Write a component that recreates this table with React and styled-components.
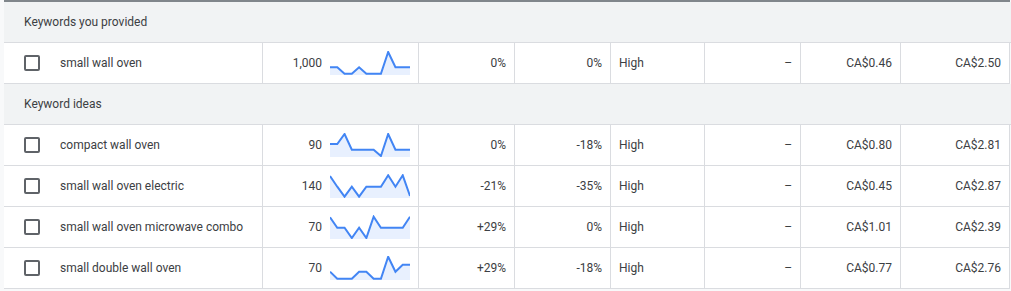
import React from "react";
import styled, { createGlobalStyle } from "styled-components";

const Global = createGlobalStyle`
  html, body { margin: 0; padding: 0; background: #f8f9fa; }
  body { font-family: Roboto, "Liberation Sans", Arial, sans-serif; }
  * { box-sizing: border-box; }
`;

const COLS = "259px 156px 96px 96px 94px 96px 100px 109px";

const Table = styled.div`
  margin-left: 4px;
  width: 1006px;
  border-top: 2px solid #80868b;
  font-size: 12px;
  color: #3c4043;
`;

const Band = styled.div`
  height: 41px;
  display: flex;
  align-items: center;
  padding-left: 20px;
  background: #f1f3f4;
  border-bottom: 1px solid #dadce0;
  width: 1007px;
`;

const Row = styled.div`
  display: grid;
  grid-template-columns: ${COLS};
  height: 41px;
  background: #fff;
  border-bottom: 1px solid #dadce0;
`;

const Cell = styled.div`
  display: flex;
  align-items: center;
  justify-content: ${(p) => (p.$align === "left" ? "flex-start" : "flex-end")};
  gap: ${(p) => p.$gap || 0}px;
  padding: 0 8px;
  border-right: 1px solid #dadce0;
  white-space: nowrap;
`;

const KeywordCell = styled(Cell)`
  justify-content: flex-start;
  padding-left: 20px;
  gap: 20px;
`;

const Checkbox = styled.span`
  width: 16px;
  height: 16px;
  border: 2px solid #5f6368;
  border-radius: 2px;
  flex: none;
`;

function Spark({ pts }) {
  const W = 80;
  const H = 24;
  const step = W / (pts.length - 1);
  const coords = pts.map((y, i) => `${(i * step).toFixed(2)},${y}`);
  const line = coords.join(" ");
  const area = `0,${H} ${line} ${W},${H}`;
  return (
    <svg width={W} height={H} viewBox={`0 0 ${W} ${H}`} style={{ flex: "none", display: "block" }}>
      <polygon points={area} fill="#e8f0fe" />
      <polyline points={line} fill="none" stroke="#4285f4" strokeWidth="2" strokeLinejoin="miter" />
    </svg>
  );
}

const provided = [
  {
    kw: "small wall oven",
    vol: "1,000",
    spark: [16.3, 16.3, 22.7, 22.7, 16.3, 22.7, 22.7, 22.7, 1, 16.3, 16.3, 16.3],
    c3: "0%",
    c4: "0%",
    comp: "High",
    dash: "–",
    low: "CA$0.46",
    high: "CA$2.50",
  },
];

const ideas = [
  {
    kw: "compact wall oven",
    vol: "90",
    spark: [11, 11, 1, 16.7, 16.7, 16.7, 16.7, 23, 1, 16.7, 16.7, 16.7],
    c3: "0%",
    c4: "-18%",
    comp: "High",
    dash: "–",
    low: "CA$0.80",
    high: "CA$2.81",
  },
  {
    kw: "small wall oven electric",
    vol: "140",
    spark: [2, 12.7, 22.7, 12.7, 22.7, 12.7, 12.7, 12.7, 1.3, 12.7, 1.3, 22],
    c3: "-21%",
    c4: "-35%",
    comp: "High",
    dash: "–",
    low: "CA$0.45",
    high: "CA$2.87",
  },
  {
    kw: "small wall oven microwave combo",
    vol: "70",
    spark: [2.3, 12.7, 12.7, 23, 12.7, 23, 1.7, 12.7, 12.7, 12.7, 12.7, 1.7],
    c3: "+29%",
    c4: "0%",
    comp: "High",
    dash: "–",
    low: "CA$1.01",
    high: "CA$2.39",
  },
  {
    kw: "small double wall oven",
    vol: "70",
    spark: [15.7, 22.7, 22.7, 22.7, 15.7, 15.7, 22.7, 22.7, 0.7, 15.7, 8.7, 8.7],
    c3: "+29%",
    c4: "-18%",
    comp: "High",
    dash: "–",
    low: "CA$0.77",
    high: "CA$2.76",
  },
];

function KRow({ r }) {
  return (
    <Row>
      <KeywordCell>
        <Checkbox />
        <span>{r.kw}</span>
      </KeywordCell>
      <Cell $gap={8}>
        <span>{r.vol}</span>
        <Spark pts={r.spark} />
      </Cell>
      <Cell>{r.c3}</Cell>
      <Cell>{r.c4}</Cell>
      <Cell $align="left">{r.comp}</Cell>
      <Cell>{r.dash}</Cell>
      <Cell>{r.low}</Cell>
      <Cell>{r.high}</Cell>
    </Row>
  );
}

export default function App() {
  return (
    <>
      <Global />
      <Table>
        <Band>Keywords you provided</Band>
        {provided.map((r) => (
          <KRow key={r.kw} r={r} />
        ))}
        <Band>Keyword ideas</Band>
        {ideas.map((r) => (
          <KRow key={r.kw} r={r} />
        ))}
      </Table>
    </>
  );
}
